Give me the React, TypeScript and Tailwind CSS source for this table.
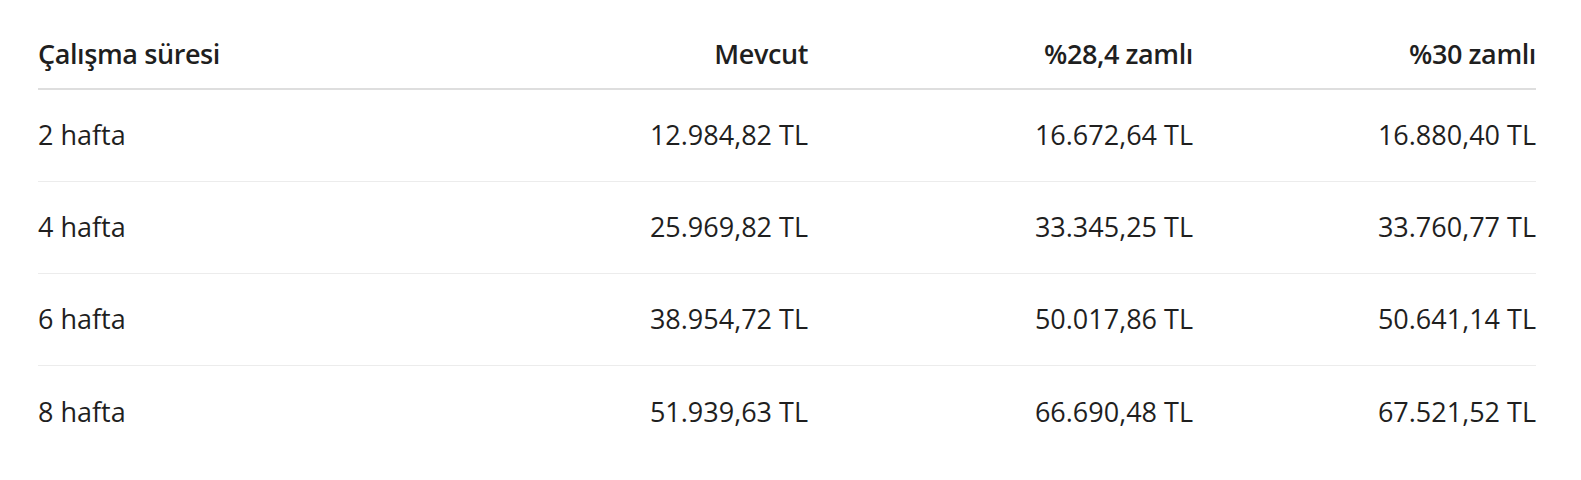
import React from "react";

const rows = [
  ["2 hafta", "12.984,82 TL", "16.672,64 TL", "16.880,40 TL"],
  ["4 hafta", "25.969,82 TL", "33.345,25 TL", "33.760,77 TL"],
  ["6 hafta", "38.954,72 TL", "50.017,86 TL", "50.641,14 TL"],
  ["8 hafta", "51.939,63 TL", "66.690,48 TL", "67.521,52 TL"],
];

export default function App() {
  return (
    <div
      className="w-full h-[480px] overflow-hidden bg-white text-[#1f1f1f]"
      style={{ fontFamily: '"Open Sans", "Noto Sans", sans-serif' }}
    >
      <div className="pl-[38px] pr-[45px] pt-[21px]">
        <div className="grid grid-cols-[382px_388px_385px_343px] h-[69px] items-center border-b-2 border-[#dedede] text-[27px] font-semibold tracking-[-0.4px]">
          <div>Çalışma süresi</div>
          <div className="text-right">Mevcut</div>
          <div className="text-right">%28,4 zamlı</div>
          <div className="text-right">%30 zamlı</div>
        </div>
        {rows.map((r, i) => (
          <div
            key={i}
            className={`grid grid-cols-[382px_388px_385px_343px] h-[92px] items-center text-[27px] ${
              i < rows.length - 1 ? "border-b border-[#ececec]" : ""
            }`}
          >
            <div>{r[0]}</div>
            <div className="text-right">{r[1]}</div>
            <div className="text-right">{r[2]}</div>
            <div className="text-right">{r[3]}</div>
          </div>
        ))}
      </div>
    </div>
  );
}
